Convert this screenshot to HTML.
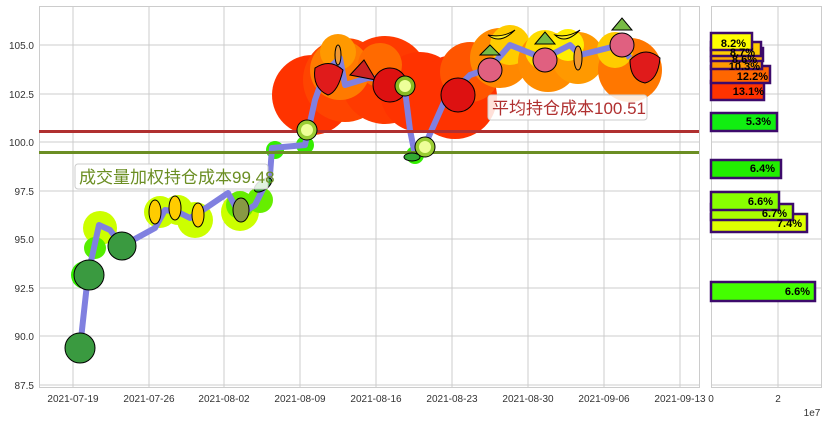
<!DOCTYPE html>
<html><head><meta charset="utf-8"><style>
html,body{margin:0;padding:0;background:#fff;}
svg{display:block;font-family:"Liberation Sans","Noto Sans CJK SC",sans-serif;}
</style></head><body>
<svg width="827" height="422" viewBox="0 0 827 422" xmlns="http://www.w3.org/2000/svg">
<rect width="827" height="422" fill="#fff"/>
<g stroke="#cccccc" stroke-width="1">
<line x1="73" y1="6" x2="73" y2="387"/><line x1="149" y1="6" x2="149" y2="387"/>
<line x1="224" y1="6" x2="224" y2="387"/><line x1="300" y1="6" x2="300" y2="387"/>
<line x1="376" y1="6" x2="376" y2="387"/><line x1="452" y1="6" x2="452" y2="387"/>
<line x1="528" y1="6" x2="528" y2="387"/><line x1="604" y1="6" x2="604" y2="387"/>
<line x1="680" y1="6" x2="680" y2="387"/>
<line x1="39" y1="45" x2="699" y2="45"/><line x1="39" y1="94" x2="699" y2="94"/>
<line x1="39" y1="142" x2="699" y2="142"/><line x1="39" y1="191" x2="699" y2="191"/>
<line x1="39" y1="239" x2="699" y2="239"/><line x1="39" y1="288" x2="699" y2="288"/>
<line x1="39" y1="336" x2="699" y2="336"/><line x1="39" y1="385" x2="699" y2="385"/>
<line x1="711" y1="45" x2="821" y2="45"/><line x1="711" y1="94" x2="821" y2="94"/>
<line x1="711" y1="142" x2="821" y2="142"/><line x1="711" y1="191" x2="821" y2="191"/>
<line x1="711" y1="239" x2="821" y2="239"/><line x1="711" y1="288" x2="821" y2="288"/>
<line x1="711" y1="336" x2="821" y2="336"/><line x1="711" y1="385" x2="821" y2="385"/>
<line x1="778" y1="6" x2="778" y2="387"/>
</g>
<rect x="39.5" y="6.5" width="660" height="381" fill="none" stroke="#cccccc"/>
<rect x="711.5" y="6.5" width="110" height="381" fill="none" stroke="#cccccc"/>
<g>
<circle cx="312" cy="95" r="40" fill="#ff3300"/><circle cx="345" cy="80" r="42" fill="#ff4400"/>
<circle cx="385" cy="80" r="44" fill="#ff3a00"/><circle cx="420" cy="92" r="40" fill="#ff3300"/>
<circle cx="455" cy="97" r="42" fill="#ff3300"/><circle cx="470" cy="72" r="30" fill="#ff5500"/>
<circle cx="340" cy="70" r="30" fill="#ff7a00"/><circle cx="338" cy="52" r="18" fill="#ff9900"/>
<circle cx="380" cy="65" r="22" fill="#ff6a00"/>
<circle cx="500" cy="58" r="30" fill="#ff8800"/><circle cx="510" cy="45" r="20" fill="#ffcc00"/>
<circle cx="548" cy="62" r="30" fill="#ff8c00"/><circle cx="545" cy="50" r="20" fill="#ffdd00"/>
<circle cx="578" cy="58" r="26" fill="#ff9900"/><circle cx="568" cy="45" r="16" fill="#ffee00"/>
<circle cx="630" cy="70" r="32" fill="#ff7700"/><circle cx="615" cy="50" r="18" fill="#ffcc00"/>
<circle cx="85" cy="275" r="14" fill="#33ee00"/><circle cx="100" cy="228" r="17" fill="#ccff00"/>
<circle cx="95" cy="248" r="11" fill="#55ee00"/><circle cx="160" cy="212" r="16" fill="#ccff00"/>
<circle cx="195" cy="220" r="18" fill="#ccff00"/><circle cx="178" cy="210" r="15" fill="#ccff00"/>
<circle cx="240" cy="212" r="19" fill="#ccff00"/><circle cx="240" cy="205" r="14" fill="#66ee00"/>
<circle cx="260" cy="200" r="13" fill="#66ee00"/><circle cx="275" cy="150" r="9" fill="#33ee00"/>
<circle cx="305" cy="145" r="9" fill="#33ee00"/><circle cx="415" cy="155" r="9" fill="#33ee00"/>
</g>
<polyline fill="none" stroke="#8080e0" stroke-width="6" stroke-linejoin="round" points="80,348 88,275 99,225 110,230 122,246 155,228 165,210 178,212 190,218 200,212 228,193 240,215 255,205 270,175 272,148 305,145 315,100 325,72 340,58 345,85 368,78 395,80 405,90 410,130 415,155 425,145 445,100 470,75 490,68 510,45 535,55 545,58 570,45 580,55 620,45 630,58"/>
<line x1="39" y1="131.5" x2="699" y2="131.5" stroke="#b03030" stroke-width="3"/>
<line x1="39" y1="152.5" x2="699" y2="152.5" stroke="#6b8e23" stroke-width="3"/>
<g stroke="#000" stroke-width="1">
<circle cx="80" cy="348" r="15" fill="#3a9a40"/><circle cx="89" cy="275" r="15" fill="#3a9a40"/>
<circle cx="122" cy="246" r="14" fill="#3a9a40"/>
<ellipse cx="155" cy="212" rx="6" ry="12" fill="#ffcc00"/><ellipse cx="175" cy="208" rx="6" ry="12" fill="#ffcc00"/>
<ellipse cx="198" cy="215" rx="6" ry="12" fill="#ffcc00"/><ellipse cx="241" cy="210" rx="8" ry="12" fill="#889944"/>
<ellipse cx="263" cy="185" rx="10" ry="5" fill="#33aa33" transform="rotate(-35 263 185)"/>
<circle cx="307" cy="130" r="10" fill="#99cc33"/><circle cx="307" cy="130" r="6" fill="#eeff99" stroke="none"/>
<path d="M315 68 Q330 58 343 70 Q338 92 328 95 Q312 88 315 68Z" fill="#e01b1b"/>
<path d="M350 75 L364 60 L376 80Z" fill="#cc2222"/>
<circle cx="390" cy="85" r="17" fill="#dd1111"/><circle cx="405" cy="86" r="10" fill="#88bb22"/><circle cx="405" cy="86" r="6" fill="#eeff99" stroke="none"/>
<circle cx="458" cy="95" r="17" fill="#dd1111"/>
<circle cx="425" cy="147" r="10" fill="#99cc33"/><circle cx="425" cy="147" r="6" fill="#eeff99" stroke="none"/>
<ellipse cx="412" cy="157" rx="8" ry="4" fill="#33aa33"/>
<circle cx="490" cy="70" r="12" fill="#e06080"/><path d="M480 55 L490 45 L500 55Z" fill="#77bb44"/>
<circle cx="545" cy="60" r="12" fill="#e06080"/><path d="M535 44 L545 32 L555 44Z" fill="#77bb44"/>
<circle cx="622" cy="45" r="12" fill="#e06080"/><path d="M612 30 L622 18 L632 30Z" fill="#77bb44"/>
<path d="M630 60 Q645 45 660 58 Q658 80 645 83 Q630 80 630 60Z" fill="#e01b1b"/>
<path d="M488 35 Q500 45 515 30 Q503 38 488 35Z" fill="#ffee22"/>
<path d="M555 35 Q565 45 580 30 Q568 38 555 35Z" fill="#ffee22"/>
<ellipse cx="578" cy="58" rx="4" ry="12" fill="#ee9933"/><ellipse cx="338" cy="55" rx="3" ry="10" fill="#ee9933"/>
</g>
<rect x="75" y="164" width="193" height="25" rx="3" fill="#fff" fill-opacity="0.85" stroke="#ccc"/>
<text x="79" y="183" font-size="17" fill="#6b8e23">成交量加权持仓成本99.48</text>
<rect x="488" y="95" width="159" height="25" rx="3" fill="#fff" fill-opacity="0.85" stroke="#ccc"/>
<text x="492" y="114" font-size="17" fill="#b03030">平均持仓成本100.51</text>
<g stroke="#3d0a6b" stroke-width="2.5">
<rect x="711" y="81" width="53" height="19" fill="#ff3300"/>
<rect x="711" y="66" width="59" height="17" fill="#ff6600"/>
<rect x="711" y="57" width="51" height="12" fill="#ff9900"/>
<rect x="711" y="48" width="52" height="13" fill="#ffaa00"/>
<rect x="711" y="42" width="50" height="14" fill="#ffcc00"/>
<rect x="711" y="33" width="41" height="17" fill="#ffff00"/>
<rect x="711" y="113" width="66" height="18" fill="#11ee11"/>
<rect x="711" y="160" width="70" height="18" fill="#22ee00"/>
<rect x="711" y="214" width="96" height="18" fill="#ddff00"/>
<rect x="711" y="204" width="82" height="16" fill="#aaff00"/>
<rect x="711" y="192" width="68" height="18" fill="#88ff00"/>
<rect x="711" y="282" width="104" height="19" fill="#44ff00"/>
</g>
<g font-size="11" font-weight="bold" text-anchor="end" fill="#000">
<text x="764" y="95">13.1%</text><text x="768" y="80">12.2%</text><text x="760" y="70">10.3%</text>
<text x="757" y="63">8.6%</text><text x="755" y="56">8.7%</text><text x="746" y="47">8.2%</text>
<text x="771" y="125">5.3%</text><text x="775" y="172">6.4%</text><text x="773" y="205">6.6%</text>
<text x="787" y="217">6.7%</text><text x="802" y="227">7.4%</text><text x="810" y="295">6.6%</text>
</g>
<g font-size="10" fill="#333" text-anchor="end">
<text x="34" y="49">105.0</text><text x="34" y="98">102.5</text><text x="34" y="146">100.0</text>
<text x="34" y="195">97.5</text><text x="34" y="243">95.0</text><text x="34" y="292">92.5</text>
<text x="34" y="340">90.0</text><text x="34" y="389">87.5</text>
</g>
<g font-size="10" fill="#333" text-anchor="middle">
<text x="73" y="402">2021-07-19</text><text x="149" y="402">2021-07-26</text><text x="224" y="402">2021-08-02</text>
<text x="300" y="402">2021-08-09</text><text x="376" y="402">2021-08-16</text><text x="452" y="402">2021-08-23</text>
<text x="528" y="402">2021-08-30</text><text x="604" y="402">2021-09-06</text><text x="680" y="402">2021-09-13</text>
<text x="711" y="402">0</text><text x="778" y="402">2</text><text x="812" y="416">1e7</text>
</g>
</svg>
</body></html>
